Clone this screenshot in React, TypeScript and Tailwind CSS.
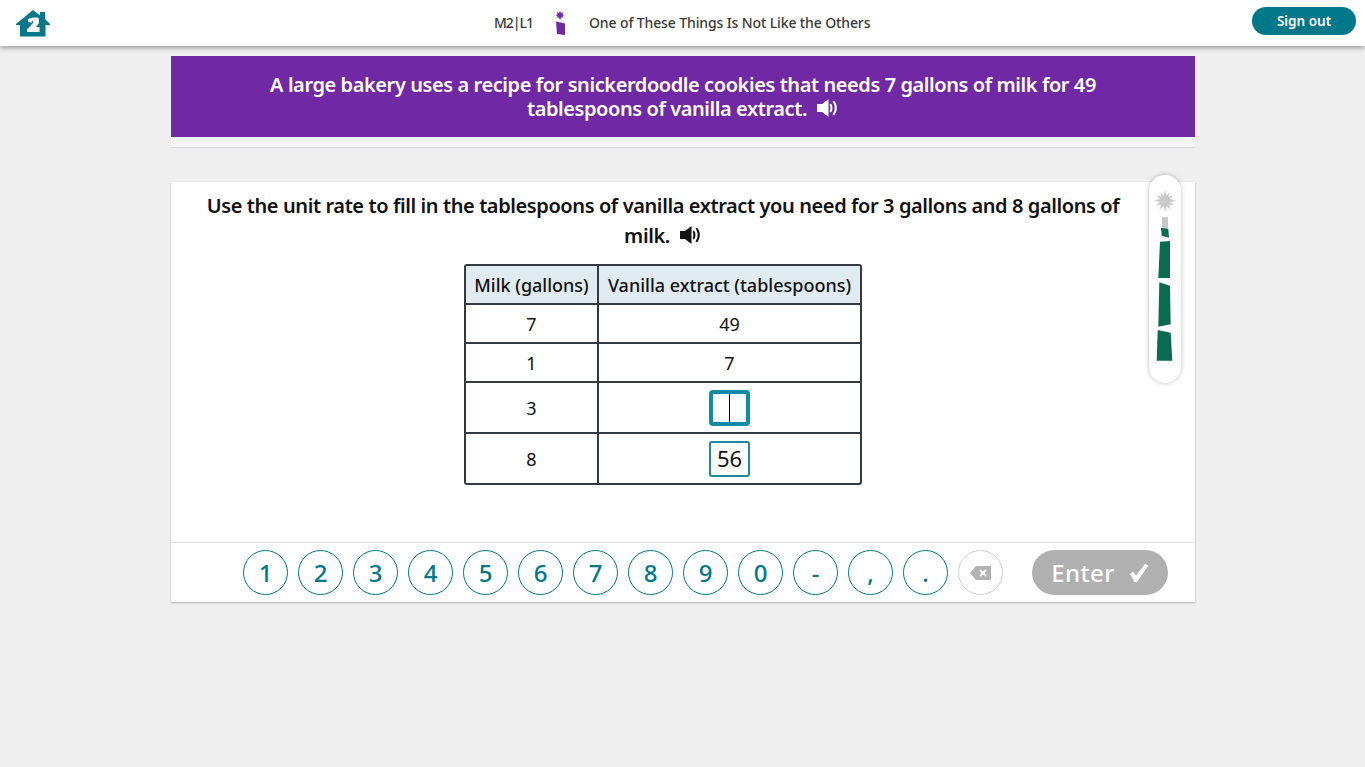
import React from "react";

const keys = ["1", "2", "3", "4", "5", "6", "7", "8", "9", "0", "-", ",", "."];

function SpeakerIcon({ className }: { className?: string }) {
  return (
    <svg viewBox="0 0 22 18" className={className} fill="currentColor">
      <path d="M0 5h5L11.500 0v18L5 13H0z" />
      <path d="M14 4.500c2 2.400 2 6.600 0 9l-1.500-1.300c1.200-1.800 1.200-4.600 0-6.400z" />
      <path d="M17 1.500c3.800 4 3.800 11 0 15l-1.500-1.300c2.900-3.400 2.900-9 0-12.400z" />
    </svg>
  );
}

function HomeLogo() {
  return (
    <svg viewBox="0 0 34 27" className="w-[34px] h-[27px]">
      <path
        fill="#00788a"
        d="M17 0l7 5.500V2h5v7L34 14v1h-4.500v11.500H4V15H0v-1z"
      />
      <path
        fill="#fff"
        d="M12 9l5-1.500h5l1 1.500v4l-3 4h3.500v5H11v-2.500l6-6.500v-2l-2 .8L17 13l-5-1z"
      />
    </svg>
  );
}

function LessonIcon() {
  return (
    <svg viewBox="0 0 14 24" className="w-[14px] h-[24px]">
      <path
        fill="#7028a4"
        d="M7 0l1 2 2-1-.6 2.200L11.500 4l-2 1 .9 2-2.200-.7L7 9 5.800 6.300l-2.200.7.900-2-2-1 2.100-.8L4 1l2 1z"
      />
      <path fill="#7028a4" d="M3 10.500l9 2V24l-8-1z" />
    </svg>
  );
}

function Thermometer() {
  return (
    <svg viewBox="0 0 32 208" className="w-[32px] h-[208px]">
      <path
        fill="#c9c9c9"
        d="M16 15l1.500 6 3-4-1 5 5-2-3.500 4 6 1.500-6 1.500 4.500 3.500-5.500-1 1.500 5.500-4-4-1.500 6-1.500-6-4 4 1.500-5.500-5.500 1 4.500-3.500-6-1.500 6-1.500-3.500-4 5 2-1-5 3 4z"
      />
      <path fill="#c9c9c9" d="M13 42h6v12h-6z" />
      <path fill="#0a6b50" d="M12 52.700l7.300 1.300.7 8.700-7.300-2z" />
      <path fill="#0a6b50" d="M11 66.700L21 66v37H9.300z" />
      <path fill="#0a6b50" d="M10.300 107.300l10.700 3.400.7 38.600-12.400 2.400z" />
      <path fill="#0a6b50" d="M8.700 155l13 2.700 1.600 28H7.700z" />
    </svg>
  );
}

function BackspaceIcon() {
  return (
    <svg viewBox="0 0 21 14" className="w-[21px] h-[14px]">
      <path fill="#b3b3b3" d="M6 0h15v14H6L0 7z" />
      <path stroke="#fff" strokeWidth="2" d="M10 4l6 6M16 4l-6 6" />
    </svg>
  );
}

function CheckIcon() {
  return (
    <svg viewBox="0 0 20 20" className="w-[20px] h-[20px]">
      <path fill="#fff" d="M1 11l3-2.500 3 4L16 1l3.500 1.500L8 19h-2.500z" />
    </svg>
  );
}

function Row({ a, b }: { a: string; b: string }) {
  return (
    <tr className="h-[39px] text-center">
      <td className="pt-px border-t-2 border-r-2 border-[#333b40]">{a}</td>
      <td className="pt-px border-t-2 border-[#333b40]">{b}</td>
    </tr>
  );
}

export default function App() {
  return (
    <div className="min-h-[767px] bg-[#efefef] font-['Noto_Sans',sans-serif] text-[#111]">
      <header className="relative h-[46px] bg-white shadow-[0_2px_5px_rgba(0,0,0,0.35)] flex items-center justify-between pl-4 pr-[9px]">
        <HomeLogo />
        <div className="absolute left-[494px] top-0 h-[45px] flex items-center text-[14px] tracking-[-0.12px] font-medium text-[#3a3a3a]">
          <span className="w-[38px] tracking-[-1px]">M2|L1</span>
          <span className="ml-[21px] mr-[22px] flex mb-[-1px]">
            <LessonIcon />
          </span>
          <span>One of These Things Is Not Like the Others</span>
        </div>
        <button className="w-[104px] h-[28px] mb-[4px] rounded-full bg-[#00788a] text-white text-[13.500px] font-semibold">
          Sign out
        </button>
      </header>

      <main className="w-[1024px] ml-[171px] pt-[10px]">
        <div className="h-[81px] bg-[#7028a4] text-white text-[20px] tracking-[-0.42px] leading-[24px] font-semibold text-center pt-[17px] px-[60px]">
          <p>
            A large bakery uses a recipe for snickerdoodle cookies that needs 7 gallons of milk for 49
            tablespoons of vanilla extract.
            <SpeakerIcon className="inline-block w-[22px] h-[18px] ml-[10px] mb-[5px]" />
          </p>
        </div>
        <div className="h-[10px] bg-[#f6f5f8] shadow-[0_1px_1px_rgba(0,0,0,0.08)]" />

        <section className="relative mt-[35px] h-[420px] bg-white shadow-[0_1px_2px_rgba(0,0,0,0.25)] flex flex-col">
          <div className="absolute left-[978px] top-[-7px] w-[32px] h-[208px] rounded-full bg-white shadow-[0_0_5px_rgba(0,0,0,0.25)]">
            <Thermometer />
          </div>

          <div className="h-[360px] flex flex-col items-center">
            <p className="w-[930px] mt-[9px] mr-[40px] text-center text-[20px] tracking-[-0.4px] leading-[30px] font-semibold">
              Use the unit rate to fill in the tablespoons of vanilla extract you need for 3 gallons and 8 gallons of
              milk.
              <SpeakerIcon className="inline-block w-[22px] h-[18px] ml-[10px] mb-[5px]" />
            </p>

            <table className="mt-[13px] mr-[40px] border-separate border-spacing-0 border-2 border-[#333b40] rounded-[3px] text-[18px]">
              <tbody>
                <tr className="h-[37px] bg-[#e1ecf2]">
                  <th className="w-[133px] p-0 pt-px font-medium border-r-2 border-[#333b40]">Milk (gallons)</th>
                  <th className="w-[261px] p-0 pt-px font-medium">Vanilla extract (tablespoons)</th>
                </tr>
                <Row a="7" b="49" />
                <Row a="1" b="7" />
                <tr className="h-[51px] text-center">
                  <td className="pt-px border-t-2 border-r-2 border-[#333b40]">3</td>
                  <td className="border-t-2 border-[#333b40]">
                    <div className="mx-auto w-[41px] h-[36px] border-[4px] border-[#0f8aa8] rounded-[4px] flex justify-center">
                      <div className="w-px bg-black" />
                    </div>
                  </td>
                </tr>
                <tr className="h-[51px] text-center">
                  <td className="pt-px border-t-2 border-r-2 border-[#333b40]">8</td>
                  <td className="border-t-2 border-[#333b40]">
                    <div className="mx-auto w-[41px] h-[36px] border-2 border-[#1f8a9e] rounded-[3px] flex items-center justify-center text-[22px]">
                      56
                    </div>
                  </td>
                </tr>
              </tbody>
            </table>
          </div>

          <div className="h-[60px] border-t border-[#e3e3e3] flex items-center pl-[72px]">
            <div className="flex gap-[10px]">
              {keys.map((k) => (
                <button
                  key={k}
                  className="w-[45px] h-[45px] rounded-full border border-[#00788a] text-[#00788a] text-[24px] font-medium flex items-center justify-center"
                >
                  {k}
                </button>
              ))}
              <button className="w-[45px] h-[45px] rounded-full border border-[#cfcfcf] flex items-center justify-center">
                <BackspaceIcon />
              </button>
            </div>
            <button className="ml-[29px] w-[136px] h-[45px] rounded-full bg-[#b0b0b0] text-white text-[24px] font-medium flex items-center justify-center gap-[14px] tracking-[0.4px]">
              Enter
              <CheckIcon />
            </button>
          </div>
        </section>
      </main>
    </div>
  );
}
